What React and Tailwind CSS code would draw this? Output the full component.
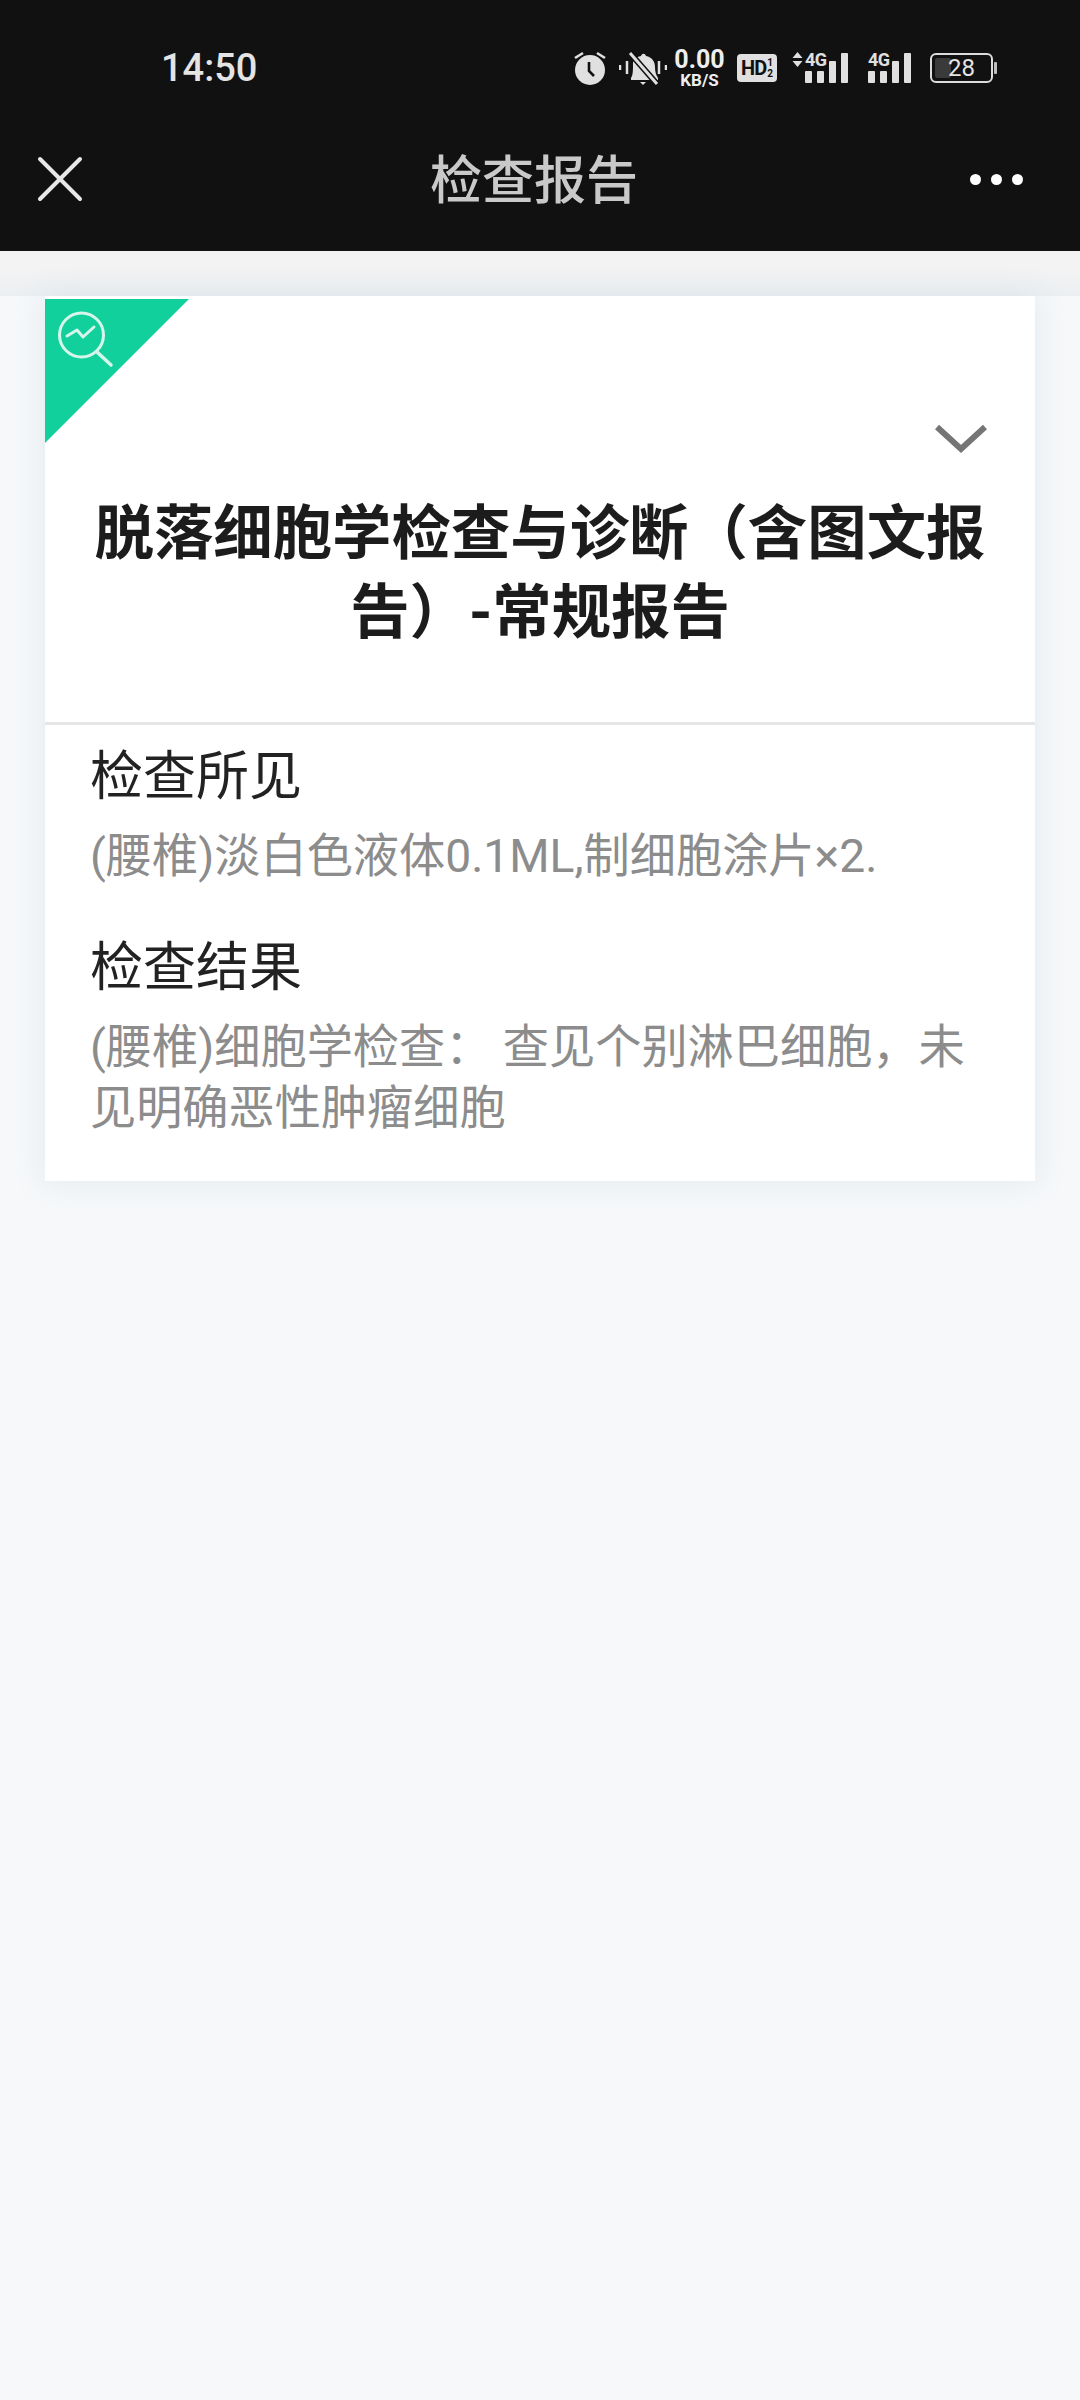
const cjk = "font-['Roboto','Noto_Sans_CJK_SC',sans-serif]";

function Signal({ arrows }) {
  return (
    <div className="relative w-[46px] h-[30px]">
      {arrows && (
        <svg className="absolute left-[-13px] top-[-1px]" width="11" height="15" viewBox="0 0 11 15" fill="#e0e0e0">
          <path d="M5.5 0l5 6H.5zM5.5 15l-5-6h10z" />
        </svg>
      )}
      <span className="absolute left-0 top-[-2px] text-[18px] leading-[18px] font-bold tracking-[-0.5px] text-[#e0e0e0]">4G</span>
      <div className="absolute left-0 bottom-0 flex items-end gap-[5px]">
        <div className="w-[7px] h-[12px] rounded-[1px] bg-[#e0e0e0]" />
        <div className="w-[7px] h-[12px] rounded-[1px] bg-[#e0e0e0]" />
        <div className="w-[7px] h-[22px] rounded-[1px] bg-[#e0e0e0]" />
        <div className="w-[7px] h-[30px] rounded-[1px] bg-[#e0e0e0]" />
      </div>
    </div>
  );
}

function StatusBar() {
  return (
    <div className="h-[134px] flex items-center pt-[1px]">
      <span className="ml-[161px] text-[38px] leading-none font-medium text-[#e4e4e4]">14:50</span>
      <div className="ml-auto mr-[83px] flex items-center">
        <svg width="34" height="34" viewBox="0 0 34 34">
          <circle cx="17" cy="19" r="15" fill="#e0e0e0" />
          <path d="M16 11v9l5 5" stroke="#111" strokeWidth="2.6" fill="none" />
          <path d="M2 7l8-5M32 7l-8-5" stroke="#e0e0e0" strokeWidth="2.6" />
        </svg>
        <svg className="ml-[12px]" width="48" height="36" viewBox="0 0 48 36">
          <path d="M14 12a10 10 0 0 1 8-6c1-3 4-3 5 0 6 1 9 6 9 11 0 5 1 8 3 11v2H12v-2c2-3 2-7 2-16z" fill="#e0e0e0" />
          <path d="M21 32h6l-3 3z" fill="#e0e0e0" />
          <path d="M11 3l27 31" stroke="#111" strokeWidth="6" />
          <path d="M11 3l27 31" stroke="#e0e0e0" strokeWidth="3" />
          <path d="M1 15v5M8 11v13M40 11v13M47 15v5" stroke="#e0e0e0" strokeWidth="2.5" />
        </svg>
        <div className="ml-[6px] w-[53px] flex flex-col items-center text-[#eeeeee] font-bold">
          <span className="text-[25px] leading-[25px]">0.00</span>
          <span className="text-[17px] leading-[17px]">KB/S</span>
        </div>
        <div className="ml-[11px] w-[40px] h-[28px] rounded-[4px] bg-[#e0e0e0] flex items-center justify-center text-[#111] font-bold overflow-hidden">
          <span className="text-[20px] leading-none tracking-[-1px]">HD</span>
          <span className="flex flex-col text-[10px] leading-[11px] ml-[1px]">
            <span>1</span>
            <span>2</span>
          </span>
        </div>
        <div className="ml-[28px]"><Signal arrows /></div>
        <div className="ml-[17px]"><Signal /></div>
        <div className="ml-[16px] flex items-center">
          <div className="relative w-[63px] h-[30px] rounded-[6px] border-2 border-[#dcdcdc] p-[3px]">
            <div className="h-full w-[16px] rounded-[2px] bg-[#3a3a3a]" />
            <span className="absolute inset-0 flex items-center justify-center text-[24px] leading-none text-[#e4e4e4]">28</span>
          </div>
          <div className="ml-[1px] w-[3px] h-[12px] rounded-[1px] bg-[#bdbdbd]" />
        </div>
      </div>
    </div>
  );
}

function NavBar() {
  return (
    <div className="relative h-[117px] flex items-center justify-center">
      <svg className="absolute left-[37px] top-[22px]" width="46" height="46" viewBox="0 0 46 46" stroke="#e8e8e8" strokeWidth="4" strokeLinecap="round">
        <path d="M3 3l40 40M43 3L3 43" />
      </svg>
      <span className={`${cjk} ml-[-12px] mt-[-22px] text-[52px] leading-none font-medium text-[#c9c9c9]`}>检查报告</span>
      <div className="absolute left-[970px] top-[40px] flex gap-[10px]">
        <div className="w-[11px] h-[11px] rounded-full bg-white" />
        <div className="w-[11px] h-[11px] rounded-full bg-white" />
        <div className="w-[11px] h-[11px] rounded-full bg-white" />
      </div>
    </div>
  );
}

function Section({ title, children, className }) {
  return (
    <div className={className}>
      <h2 className="text-[53px] leading-[60px] text-[#222222]">{title}</h2>
      <p className="mt-[19px] text-[46.2px] leading-[61px] text-[#8c8c8c]">{children}</p>
    </div>
  );
}

export default function App() {
  return (
    <div className={`${cjk} relative min-h-[2400px] bg-[#f6f8fa]`}>
      <div className="bg-[#111111]">
        <StatusBar />
        <NavBar />
      </div>
      <div className="h-[45px] bg-gradient-to-b from-[#f3f3f3] from-40% to-[#ebeff2]" />
      <div className="relative mx-[45px] bg-white shadow-[0_0_28px_rgba(200,212,222,0.45)]">
        <svg className="absolute left-0 top-[3px]" width="144" height="144" viewBox="0 0 144 144">
          <path d="M0 0h144L0 144z" fill="#12d09c" />
          <circle cx="36.5" cy="36" r="22" fill="none" stroke="#d6f6ec" strokeWidth="3" />
          <path d="M52 53l14 13" stroke="#d6f6ec" strokeWidth="3.5" strokeLinecap="round" />
          <path d="M22 37l10-6 6 7 11-10" fill="none" stroke="#d6f6ec" strokeWidth="3" strokeLinecap="round" strokeLinejoin="round" />
        </svg>
        <div className="h-[429px] border-b-[3px] border-[#e4e6e7] pt-[199px] px-[45px]">
          <svg className="absolute left-[890px] top-[128px]" width="52" height="30" viewBox="0 0 52 30" fill="none" stroke="#757575" strokeWidth="6">
            <path d="M2 3l24 22L50 3" />
          </svg>
          <h1 className="text-[59.4px] leading-[79px] font-bold text-[#1c1c1c] text-center">脱落细胞学检查与诊断（含图文报告）-常规报告</h1>
        </div>
        <div className="px-[45px] pt-[22px] pb-[42px]">
          <Section title="检查所见">(腰椎)淡白色液体0.1ML,制细胞涂片×2.</Section>
          <Section title="检查结果" className="mt-[51px]">(腰椎)细胞学检查： 查见个别淋巴细胞，未见明确恶性肿瘤细胞</Section>
        </div>
      </div>
    </div>
  );
}
